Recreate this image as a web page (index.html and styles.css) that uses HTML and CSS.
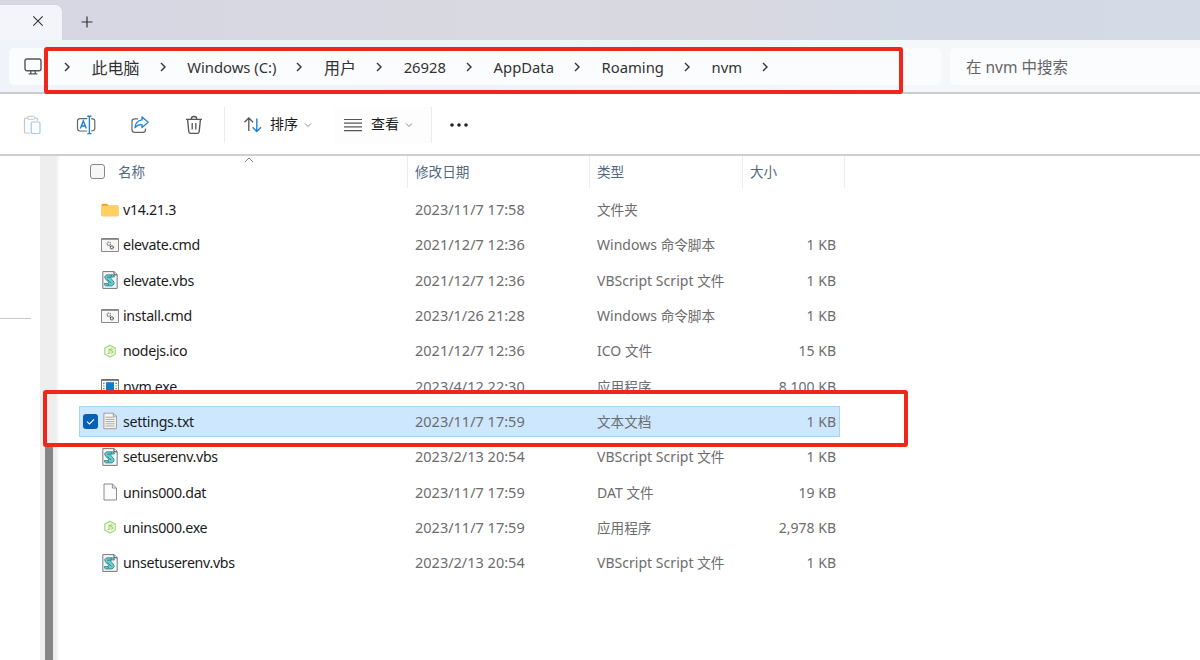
FILE: index.html
```html
<!DOCTYPE html>
<html lang="zh-CN">
<head>
    <meta charset="UTF-8">
    <meta name="viewport" content="width=device-width, initial-scale=1.0">
    <title>nvm</title>
    <link rel="stylesheet" href="styles.css">
</head>
<body>
    <!-- Shared icons -->
    <svg class="icon-defs" width="0" height="0">
        <symbol id="chevron-right" viewBox="0 0 8 12">
            <path d="M2 2l4 4-4 4" fill="none" stroke="#333" stroke-width="1.4"/>
        </symbol>
        <symbol id="chevron-down" viewBox="0 0 8 6">
            <path d="M1 1.5l3 3 3-3" fill="none" stroke="#888" stroke-width="1"/>
        </symbol>
        <symbol id="folder" viewBox="0 0 18 18">
            <path d="M.5 4.2q0-1.5 1.4-1.5h4l1.7 1.7h8.6q1.3 0 1.3 1.3v8.2q0 1.3-1.3 1.3H1.8q-1.3 0-1.3-1.3z" fill="#e9a52c"/>
            <path d="M.5 6q0-1.2 1.3-1.2h14.4q1.3 0 1.3 1.2v7.9q0 1.3-1.3 1.3H1.8q-1.3 0-1.3-1.3z" fill="#ffd061"/>
        </symbol>
        <symbol id="cmd" viewBox="0 0 18 18">
            <path d="M.5 2.7h17v12.8H.5z" fill="#f7f7f7" stroke="#8b8b8b"/>
            <path d="M.5 3h17" stroke="#777" stroke-width="1.4"/>
            <circle cx="7.8" cy="7.7" r="1.7" fill="none" stroke="#777" stroke-width="1.2" stroke-dasharray="1.1 .5"/>
            <circle cx="10.8" cy="11.3" r="1.5" fill="none" stroke="#444" stroke-width="1.2" stroke-dasharray="1.1 .4"/>
        </symbol>
        <symbol id="vbs" viewBox="0 0 18 18">
            <path d="M1.8.6h11.4l3 3v13.8H1.8z" fill="#f4f7f7" stroke="#777"/>
            <path d="M13 .8v3h3" fill="#fff" stroke="#444"/>
            <path d="M5.5 3.8h6.3q1.8.3 1.6 2.2h-3.2q-1.2.6-.2 1.7l2 1.9q2.6 3.6-1 5.3H4.6q-1.8-.6-1.2-2.4h3.5q1.4-.6.4-1.7L4.6 8.2q-2.4-2.8.9-4.4z" fill="#5fd0d3" stroke="#3a737b" stroke-width=".8"/>
            <path d="M6 6.2h4M6.3 8.6l4 3.6M10.2 4v2.2M7.2 12.6v2" fill="none" stroke="#3a737b" stroke-width=".9"/>
        </symbol>
        <symbol id="node" viewBox="0 0 18 18">
            <path d="M9 3.2l5.2 3v6L9 15.1l-5.2-2.9v-6z" fill="#f4fbec" stroke="#a3d977" stroke-width="1.2"/>
            <path d="M8 6.5v4.4q0 1-1.5.5M12 7.2q-2.7-.9-2.7.6 0 1 1.3 1.1 1.6.2 1.3 1.4-.5 1.3-2.7.4" fill="none" stroke="#9bd46b" stroke-width="1.1"/>
        </symbol>
        <symbol id="exe" viewBox="0 0 18 18">
            <path d="M.5 2.6h17v13H.5z" fill="#fafafa" stroke="#7c7c7c"/>
            <path d="M.5 3h17" stroke="#666" stroke-width="1.5"/>
            <path d="M5 5.2h8v8H5z" fill="#0d7bd0"/>
            <path d="M2 6.4h1.6M2 9h1.6M2 11.6h1.6M14.4 6.4H16M14.4 9H16M14.4 11.6H16" stroke="#888" stroke-width="1.2"/>
        </symbol>
        <symbol id="txt" viewBox="0 0 18 18">
            <path d="M2.9 1.2h9.6l2.9 2.9v12.6H2.9z" fill="#f6f5f1" stroke="#a09d98"/>
            <path d="M12.3 1.2v3h3" fill="none" stroke="#a09d98"/>
            <path d="M4.5 5.2h9M4.5 7.4h9M4.5 9.6h9M4.5 11.8h9M4.5 14h9" stroke="#aaa8a5" stroke-width="1"/>
        </symbol>
        <symbol id="dat" viewBox="0 0 18 18">
            <path d="M3 1h8.4L15.5 5v12H3z" fill="#fbfbfb" stroke="#8c8c8c"/>
            <path d="M11.4 1v4h4" fill="none" stroke="#8c8c8c"/>
        </symbol>
    </svg>

    <div class="tab-bar">
        <div class="tab">
            <svg width="12" height="12" viewBox="0 0 12 12"><path d="M1.3 1.3l9.4 9.4M10.7 1.3l-9.4 9.4" stroke="#333" stroke-width="1.1"/></svg>
        </div>
        <svg class="new-tab" width="12" height="12" viewBox="0 0 12 12"><path d="M6 .5v11M.5 6h11" stroke="#333" stroke-width="1.2"/></svg>
    </div>

    <div class="address-bar">
        <div class="breadcrumb">
            <svg class="pc" width="18" height="18" viewBox="0 0 18 18"><rect x="1" y="1" width="16" height="11.8" rx="2" fill="none" stroke="#555" stroke-width="1.4"/><path d="M6.8 12.8v3M11.2 12.8v3M4.6 15.9h8.8" fill="none" stroke="#555" stroke-width="1.3"/></svg>
            <svg class="chevron"><use href="#chevron-right"/></svg>
            <span class="zh">此电脑</span>
            <svg class="chevron"><use href="#chevron-right"/></svg>
            <span>Windows (C:)</span>
            <svg class="chevron"><use href="#chevron-right"/></svg>
            <span class="zh">用户</span>
            <svg class="chevron"><use href="#chevron-right"/></svg>
            <span>26928</span>
            <svg class="chevron"><use href="#chevron-right"/></svg>
            <span>AppData</span>
            <svg class="chevron"><use href="#chevron-right"/></svg>
            <span>Roaming</span>
            <svg class="chevron"><use href="#chevron-right"/></svg>
            <span>nvm</span>
            <svg class="chevron"><use href="#chevron-right"/></svg>
        </div>
        <div class="search">在 nvm 中搜索</div>
        <div class="mark mark-path"></div>
    </div>

    <div class="toolbar">
        <div class="tools">
            <svg width="20" height="20" viewBox="0 0 20 20" fill="none"><path d="M6.5 3H3.8Q2.5 3 2.5 4.3v12.4q0 1.3 1.3 1.3h4M13 3h1.2q1.3 0 1.3 1.3v1.4" stroke="#c3c6ca" stroke-width="1.2"/><rect x="5.5" y="1.3" width="7.5" height="3" rx="1.4" stroke="#c3c6ca"/><rect x="9.2" y="7" width="8.8" height="11.5" rx="1.4" stroke="#9dc9ea" stroke-width="1.2"/></svg>
            <svg width="20" height="20" viewBox="0 0 20 20" fill="none"><path d="M11.2 3.6H4Q1.5 3.6 1.5 6v7.6Q1.5 16 4 16h7.2M15.2 3.6q3.6 0 3.6 2.4v7.6q0 2.4-3.6 2.4" stroke="#666" stroke-width="1.2"/><path d="M4.3 13.5L7.3 6l3 7.5M5.3 11h4M11.3 1.2h4.2M11.3 18.6h4.2M13.4 1.2v17.4" stroke="#1e83d8" stroke-width="1.4"/></svg>
            <svg width="20" height="20" viewBox="0 0 20 20" fill="none"><path d="M8 3.8H4.6Q2 3.8 2 6.4v8.4q0 2.6 2.6 2.6h8.2q2.7 0 2.7-2.6v-1.2" stroke="#666" stroke-width="1.2"/><path d="M12 2l6.3 5.3L12 12.5V9.6q-4.4-.3-7 3.1.4-6.8 7-7.8z" stroke="#1e83d8" stroke-width="1.3" stroke-linejoin="round"/></svg>
            <svg width="20" height="20" viewBox="0 0 20 20" fill="none"><path d="M2 4.4h16M7.2 4.2q0-2.7 2.8-2.7t2.8 2.7M3.6 4.6l1.2 12q.2 1.8 2 1.8h6.4q1.8 0 2-1.8l1.2-12M8.2 8v6.4M11.8 8v6.4" stroke="#555" stroke-width="1.3"/></svg>
        </div>
        <div class="menu sort">
            <svg width="20" height="18" viewBox="0 0 20 18" fill="none"><path d="M5.8 15V2M1.5 6.3L5.8 2l4.3 4.3" stroke="#555" stroke-width="1.3"/><path d="M13.8 2.5v13M9.6 11.3l4.2 4.2 4.2-4.2" stroke="#1e83d8" stroke-width="1.4"/></svg>
            <span>排序</span>
            <svg class="down"><use href="#chevron-down"/></svg>
        </div>
        <div class="menu view">
            <svg width="18" height="16" viewBox="0 0 18 16"><path d="M0 2.5h18M0 6.2h18M0 9.9h18M0 13.6h18" stroke="#555" stroke-width="1.2"/></svg>
            <span>查看</span>
            <svg class="down"><use href="#chevron-down"/></svg>
        </div>
        <svg class="more" width="20" height="6" viewBox="0 0 20 6"><circle cx="3" cy="3" r="1.8"/><circle cx="10" cy="3" r="1.8"/><circle cx="17" cy="3" r="1.8"/></svg>
    </div>

    <div class="main">
        <div class="sidebar"></div>
        <div class="scrollbar"><div class="thumb"></div></div>
        <div class="files">
            <div class="columns">
                <div class="col-name"><span class="checkbox"></span>名称
                    <svg class="sort-mark" width="10" height="6" viewBox="0 0 10 6"><path d="M1 5l4-4 4 4" fill="none" stroke="#888"/></svg>
                </div>
                <div>修改日期</div>
                <div>类型</div>
                <div>大小</div>
            </div>
            <div class="row">
                <svg class="icon"><use href="#folder"/></svg>
                <span class="name">v14.21.3</span>
                <span class="date">2023/11/7 17:58</span>
                <span class="type"><i>文件夹</i></span>
                <span class="size"></span>
            </div>
            <div class="row">
                <svg class="icon"><use href="#cmd"/></svg>
                <span class="name">elevate.cmd</span>
                <span class="date">2021/12/7 12:36</span>
                <span class="type">Windows <i>命令脚本</i></span>
                <span class="size">1 KB</span>
            </div>
            <div class="row">
                <svg class="icon"><use href="#vbs"/></svg>
                <span class="name">elevate.vbs</span>
                <span class="date">2021/12/7 12:36</span>
                <span class="type">VBScript Script <i>文件</i></span>
                <span class="size">1 KB</span>
            </div>
            <div class="row">
                <svg class="icon"><use href="#cmd"/></svg>
                <span class="name">install.cmd</span>
                <span class="date">2023/1/26 21:28</span>
                <span class="type">Windows <i>命令脚本</i></span>
                <span class="size">1 KB</span>
            </div>
            <div class="row">
                <svg class="icon"><use href="#node"/></svg>
                <span class="name">nodejs.ico</span>
                <span class="date">2021/12/7 12:36</span>
                <span class="type">ICO <i>文件</i></span>
                <span class="size">15 KB</span>
            </div>
            <div class="row">
                <svg class="icon"><use href="#exe"/></svg>
                <span class="name">nvm.exe</span>
                <span class="date">2023/4/12 22:30</span>
                <span class="type"><i>应用程序</i></span>
                <span class="size">8,100 KB</span>
            </div>
            <div class="row selected">
                <svg class="checked" width="15" height="15" viewBox="0 0 15 15"><rect width="15" height="15" rx="3" fill="#0560b6"/><path d="M4 7.6l2.5 2.4L11 5.4" fill="none" stroke="#fff" stroke-width="1.1"/></svg>
                <svg class="icon"><use href="#txt"/></svg>
                <span class="name">settings.txt</span>
                <span class="date">2023/11/7 17:59</span>
                <span class="type"><i>文本文档</i></span>
                <span class="size">1 KB</span>
                <div class="mark mark-file"></div>
            </div>
            <div class="row">
                <svg class="icon"><use href="#vbs"/></svg>
                <span class="name">setuserenv.vbs</span>
                <span class="date">2023/2/13 20:54</span>
                <span class="type">VBScript Script <i>文件</i></span>
                <span class="size">1 KB</span>
            </div>
            <div class="row">
                <svg class="icon"><use href="#dat"/></svg>
                <span class="name">unins000.dat</span>
                <span class="date">2023/11/7 17:59</span>
                <span class="type">DAT <i>文件</i></span>
                <span class="size">19 KB</span>
            </div>
            <div class="row">
                <svg class="icon"><use href="#node"/></svg>
                <span class="name">unins000.exe</span>
                <span class="date">2023/11/7 17:59</span>
                <span class="type"><i>应用程序</i></span>
                <span class="size">2,978 KB</span>
            </div>
            <div class="row">
                <svg class="icon"><use href="#vbs"/></svg>
                <span class="name">unsetuserenv.vbs</span>
                <span class="date">2023/2/13 20:54</span>
                <span class="type">VBScript Script <i>文件</i></span>
                <span class="size">1 KB</span>
            </div>
        </div>
    </div>
</body>
</html>
```
FILE: styles.css
```css
* {
    box-sizing: border-box;
}
body {
    margin: 0;
    height: 660px;
    overflow: hidden;
    display: flex;
    flex-direction: column;
    background-color: #fff;
    color: #1b1b1b;
    font-family: "Noto Sans", "Noto Sans CJK SC", sans-serif;
    font-size: 14px;
}
svg {
    display: block;
    flex: none;
}
.icon-defs {
    position: absolute;
}
/* Tabs */
.tab-bar {
    height: 40px;
    flex: none;
    display: flex;
    align-items: flex-end;
    background: linear-gradient(90deg, #d6d7e3 0%, #d9d9e1 45%, #d8d8e1 62%, #d4dae5 75%, #d4dbe6 100%);
}
.tab {
    width: 62px;
    height: 35px;
    padding: 10px 0 0 31.5px;
    background-color: #f3f5fb;
    border-radius: 0 7px 0 0;
}
.new-tab {
    margin: 0 0 12px 19px;
}
/* Address bar */
.address-bar {
    position: relative;
    height: 54px;
    flex: none;
    display: flex;
    align-items: flex-start;
    padding: 8px 0 0 9px;
    gap: 9px;
    background: linear-gradient(90deg, #f1f3fa 0%, #eff2fa 40%, #f5f8fb 80%, #f5f7fa 100%);
    border-bottom: 2px solid #cacbcd;
}
.breadcrumb {
    width: 932px;
    height: 37px;
    display: flex;
    align-items: center;
    padding-left: 15px;
    background-color: #fbfcfd;
    border-radius: 5px;
    font-size: 14.8px;
    color: #333;
    white-space: nowrap;
}
.breadcrumb .pc {
    margin-right: 21px;
}
.breadcrumb .chevron {
    width: 8px;
    height: 12px;
}
.breadcrumb span {
    margin: 0 19px 0 20.6px;
}
.breadcrumb .zh {
    font-size: 16px;
}
.search {
    flex: 1;
    height: 37px;
    padding-left: 16px;
    line-height: 38px;
    background-color: #fbfcfd;
    border-radius: 5px 0 0 5px;
    font-size: 15.5px;
    color: #666;
}
/* Toolbar */
.toolbar {
    height: 62px;
    flex: none;
    display: flex;
    align-items: center;
    padding-top: 2px;
    border-bottom: 2px solid #cfcfcf;
}
.tools {
    width: 225px;
    height: 36px;
    display: flex;
    align-items: center;
    gap: 34px;
    padding-left: 22px;
    border-right: 1px solid #ececec;
}
.menu {
    height: 36px;
    display: flex;
    align-items: center;
    font-size: 14px;
    white-space: nowrap;
}
.menu span {
    line-height: 20px;
    margin-top: -2px;
}
.menu .down {
    width: 8px;
    height: 6px;
}
.sort {
    width: 109px;
    padding-left: 18px;
}
.sort span {
    margin-left: 7px;
    margin-right: 6px;
}
.view {
    width: 98px;
    padding-left: 10px;
    background-color: #fdfdfd;
    border-right: 1px solid #ececec;
}
.view span {
    margin-left: 9px;
    margin-right: 6px;
}
.more {
    margin-left: 17px;
    fill: #222;
}
/* File list */
.main {
    flex: 1;
    display: flex;
    min-height: 0;
}
.sidebar {
    width: 31px;
    height: 163px;
    margin-right: 9px;
    border-bottom: 1px solid #c8c8c8;
}
.scrollbar {
    width: 20px;
    padding: 290px 0 0 5px;
    background: linear-gradient(90deg, #eee 0, #eee 16px, #f8f8f8 18px, #fff 20px);
}
.thumb {
    width: 8px;
    height: 100%;
    background-color: #868686;
}
.files {
    width: 785px;
    padding-left: 19px;
}
.columns {
    display: grid;
    grid-template-columns: 329px 182px 153px 102px;
    height: 32px;
    margin-bottom: 6.2px;
    font-size: 13.6px;
    line-height: 31px;
    color: #546980;
}
.columns div {
    padding-left: 7px;
    border-right: 1px solid #ececec;
}
.columns .col-name {
    position: relative;
    display: flex;
    align-items: center;
    padding-left: 11px;
    padding-bottom: 1px;
}
.checkbox {
    width: 15px;
    height: 15px;
    margin-right: 13px;
    border: 1px solid #888;
    border-radius: 3px;
    background-color: #f7f7f7;
}
.sort-mark {
    position: absolute;
    left: 165px;
    top: 1px;
}
.row {
    position: relative;
    width: 761px;
    height: 31px;
    margin-bottom: 4.3px;
    padding-right: 4px;
    display: grid;
    grid-template-columns: 22px 22px 292px 182px 100px 1fr;
    align-items: center;
    white-space: nowrap;
    color: #6d6d6d;
}
.selected {
    background-color: #cce7fe;
    box-shadow: inset 0 0 0 1px #a5d3f5;
}
.checked {
    margin-left: 4px;
}
.icon {
    grid-column: 2;
    width: 18px;
    height: 18px;
}
.name {
    color: #1b1b1b;
    font-size: 14.2px;
    letter-spacing: -0.3px;
}
.date {
    font-size: 14.5px;
    line-height: 19px;
}
.type {
    line-height: 19px;
    letter-spacing: 0.03px;
}
.type i {
    font-style: normal;
    font-size: 13.6px;
    letter-spacing: 0;
}
.size {
    text-align: right;
}
/* Red highlight boxes */
.mark {
    position: absolute;
    border: 4px solid #f0251b;
    border-radius: 3px;
}
.mark-path {
    left: 44px;
    top: 7px;
    width: 859px;
    height: 47px;
}
.mark-file {
    left: -36px;
    top: -15.5px;
    width: 865px;
    height: 57px;
    z-index: 1;
}
```
